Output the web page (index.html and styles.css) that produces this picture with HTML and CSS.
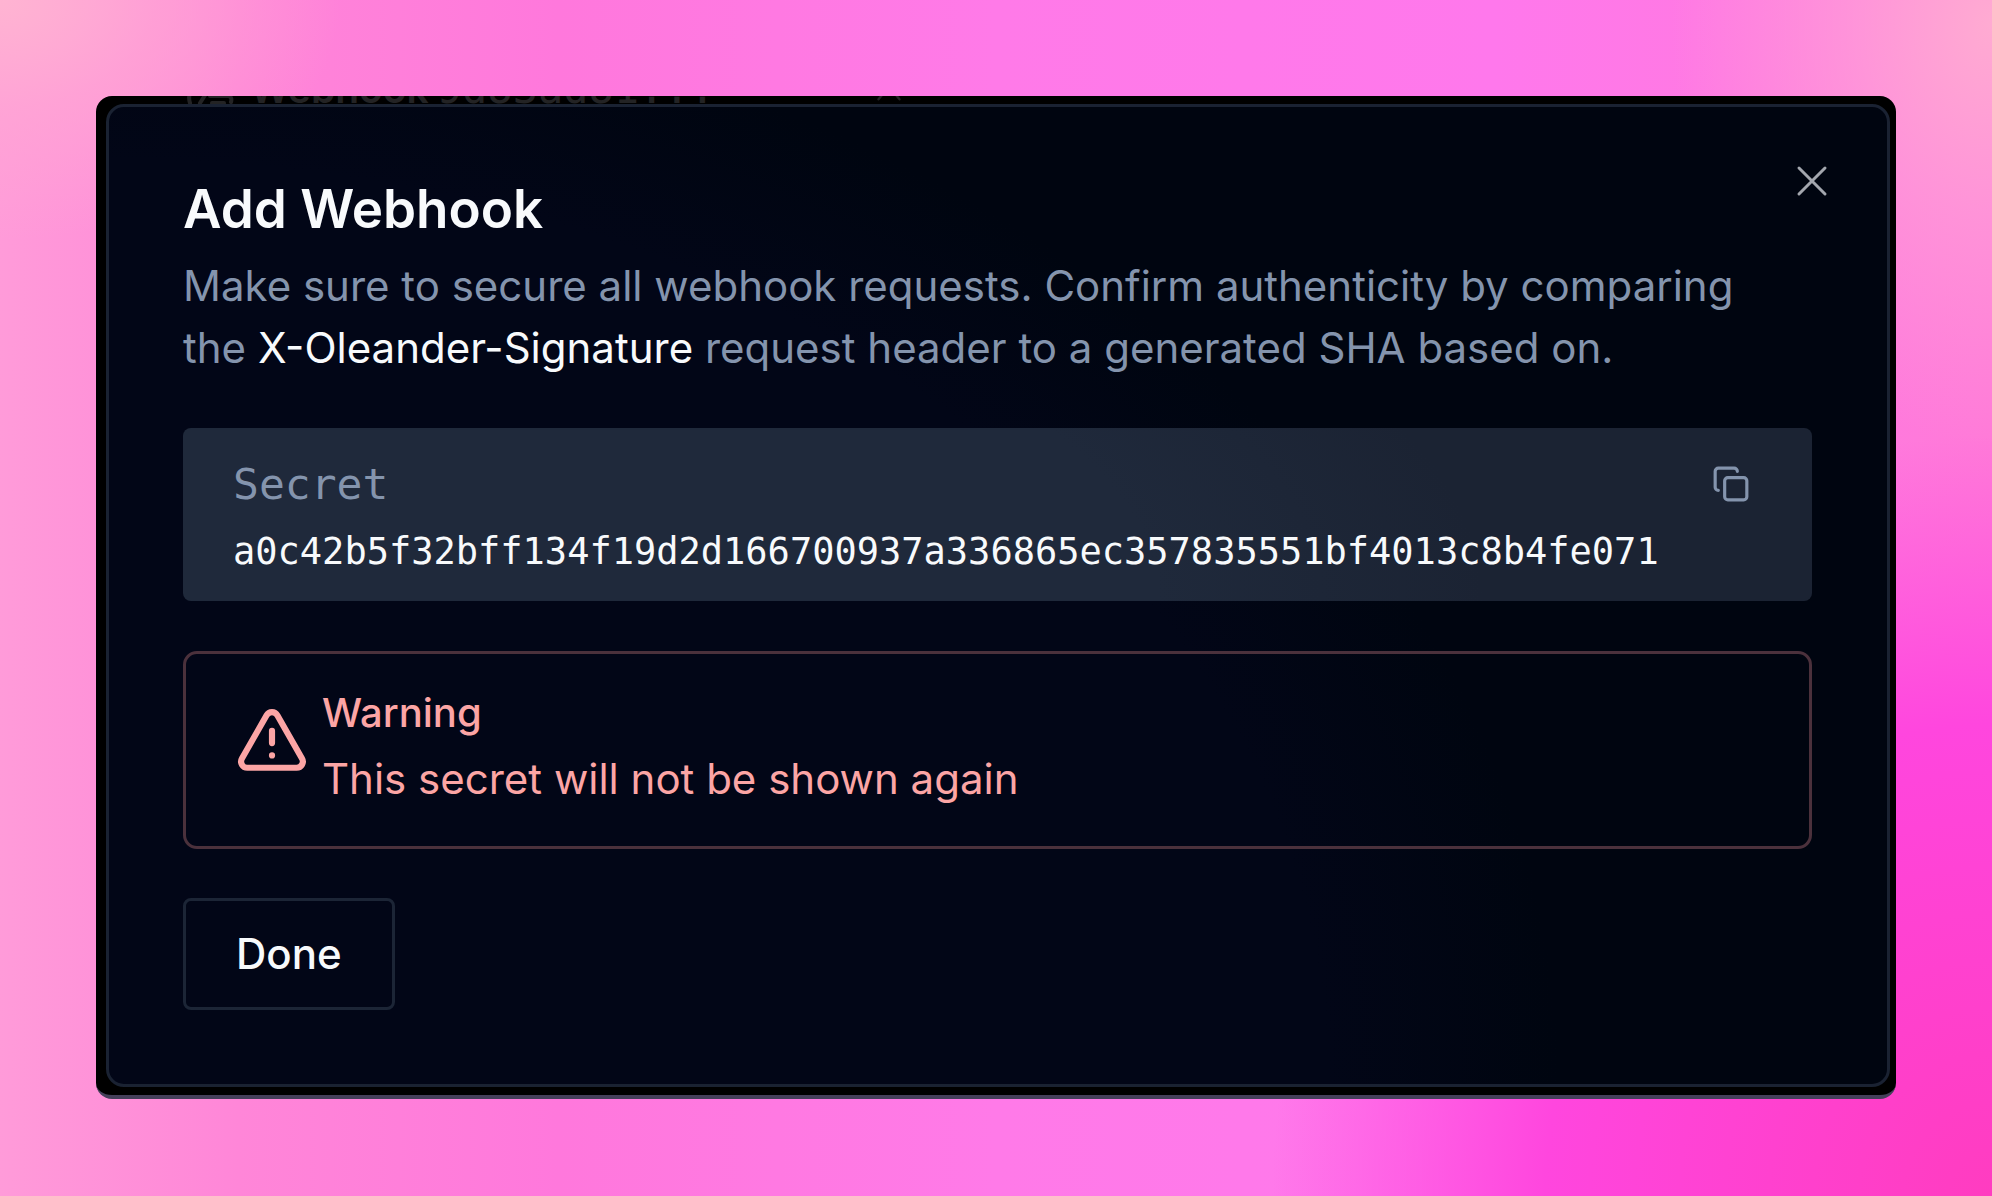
FILE: index.html
```html
<!DOCTYPE html>
<html lang="en">
<head>
<meta charset="utf-8">
<meta name="viewport" content="width=device-width, initial-scale=1">
<title>Add Webhook</title>
<link rel="stylesheet" href="styles.css">
</head>
<body>
<main class="frame">
  <div class="list-row" aria-hidden="true">
    <svg class="row-icon" viewBox="0 0 48 48"><path d="M4 47c-2-6 0-11 4-14M14 47l9-14M24 40h18c3 0 4 3 3 6M26 47h12"/></svg>
    <span class="row-name">Webhook</span>
    <span class="row-id">9d83ad81...</span>
    <svg class="row-chevron" viewBox="0 0 24 24"><path d="M3 20l9-11 9 11"/></svg>
  </div>
  <section class="dialog" role="dialog" aria-labelledby="dialog-title">
    <header class="dialog-header">
      <h1 class="title" id="dialog-title">Add Webhook</h1>
      <button class="close" type="button" aria-label="Close"><svg viewBox="0 0 32 32"><path d="M3 3l26 26M29 3L3 29"/></svg></button>
    </header>
    <p class="description">Make sure to secure all webhook requests. Confirm authenticity by comparing the <strong>X-Oleander-Signature</strong> request header to a generated SHA based on.</p>
    <div class="secret">
      <div class="secret-head">
        <span>Secret</span>
        <button class="copy" type="button" aria-label="Copy secret"><svg viewBox="0 0 24 24"><rect x="8" y="8" width="14" height="14" rx="2"/><path d="M4 16c-1.1 0-2-.9-2-2V4c0-1.1.9-2 2-2h10c1.1 0 2 .9 2 2"/></svg></button>
      </div>
      <code class="secret-value">a0c42b5f32bff134f19d2d166700937a336865ec357835551bf4013c8b4fe071</code>
    </div>
    <div class="alert" role="alert">
      <svg class="alert-icon" viewBox="0 0 24 24"><path d="m21.73 18-8-14a2 2 0 0 0-3.48 0l-8 14A2 2 0 0 0 4 21h16a2 2 0 0 0 1.73-3ZM12 9v4M12 17h.01"/></svg>
      <div>
        <h2 class="alert-title">Warning</h2>
        <p class="alert-text">This secret will not be shown again</p>
      </div>
    </div>
    <button class="done" type="button">Done</button>
  </section>
</main>
</body>
</html>
```
FILE: styles.css
```css
* {
  box-sizing: border-box;
}

body {
  margin: 0;
  min-height: 100vh;
  padding: 96px;
  font-family: Inter, "Liberation Sans", sans-serif;
  font-size: 42px;
  line-height: 62px;
  color: #f8fafc;
  background:
    radial-gradient(340px 240px at 0% 0%, #ffb4d2 0%, #ffa8d4aa 45%, #ffa8d400 100%),
    radial-gradient(320px 420px at 100% 2%, #ffabd2 0%, #ffa0d8aa 45%, #ffa0d800 100%),
    radial-gradient(720px 760px at 100% 100%, #ff3cc0 0%, #ff46de 62%, #ff50e200 100%),
    linear-gradient(90deg, #ff9bd9 0%, #ff86d8 12%, #ff78dc 28%, #ff7ae8 50%, #ff78ec 75%, #ff7ad8 100%);
}

h1, h2, p {
  margin: 0;
}

button {
  font: inherit;
  color: inherit;
  background: none;
  border: 0;
  padding: 0;
}

svg {
  display: block;
  fill: none;
  stroke: currentColor;
  stroke-width: 2;
  stroke-linecap: round;
  stroke-linejoin: round;
}

.frame {
  padding: 0 6px 8px 10px;
  background: #000;
  border-bottom: 4px solid #45405a;
  border-radius: 16px;
  overflow: hidden;
}

/* List row that the dialog covers, only its lower edge shows */
.list-row {
  display: flex;
  align-items: flex-end;
  height: 8px;
  padding-left: 80px;
  overflow: hidden;
  color: #232324;
}

.row-icon {
  flex: none;
  width: 48px;
  height: 48px;
  margin-right: 16px;
  stroke-width: 4;
}

.row-name,
.row-id {
  margin-bottom: -16px;
}

.row-name {
  margin-right: 8px;
  font-size: 39px;
  font-weight: 600;
}

.row-id {
  font-family: "DejaVu Sans Mono", monospace;
}

.row-chevron {
  flex: none;
  width: 28px;
  height: 28px;
  margin-left: 160px;
}

.dialog {
  padding: 72px 75px 74px 74px;
  background: radial-gradient(ellipse 1450px 1100px at 0% 100%, #020617 0%, #020617 84%, #000510 100%);
  border: 3px solid #1a2232;
  border-radius: 18px;
}

.dialog-header {
  display: flex;
  justify-content: space-between;
}

.title {
  font-size: 53px;
  font-weight: 600;
  line-height: 60px;
}

.close {
  width: 32px;
  height: 32px;
  margin: -14px -16px 0 0;
  color: #a3a7ae;
}

.close svg {
  stroke-width: 3;
}

.description {
  padding: 16px 40px 0 0;
  color: #8494ad;
}

.description strong {
  font-weight: 400;
  color: #f8fafc;
}

.secret {
  margin-top: 49px;
  padding: 25px 50px 12px;
  font-family: "DejaVu Sans Mono", monospace;
  background: radial-gradient(ellipse 1300px 500px at 0% 100%, #1f293b 0%, #1f293b 75%, #1b2333 100%);
  border-radius: 8px;
}

.secret-head {
  display: flex;
  align-items: center;
  justify-content: space-between;
  font-size: 43px;
  color: #8494ad;
}

.copy {
  margin-right: 12px;
}

.copy svg {
  width: 38px;
  height: 38px;
}

.secret-value {
  display: block;
  font: inherit;
  font-size: 37px;
  line-height: 74px;
}

.alert {
  display: flex;
  align-items: flex-start;
  gap: 13px;
  margin-top: 50px;
  padding: 28px 49px 36px;
  color: #fca5a5;
  border: 3px solid #4b313c;
  border-radius: 14px;
}

.alert-icon {
  flex: none;
  width: 74px;
  height: 74px;
  margin-top: 21px;
}

.alert-title {
  margin-bottom: 4px;
  font-size: 40px;
  font-weight: 500;
}

.done {
  margin-top: 49px;
  padding: 22px 50px;
  font-weight: 500;
  border: 3px solid #1c2536;
  border-radius: 8px;
}
```
